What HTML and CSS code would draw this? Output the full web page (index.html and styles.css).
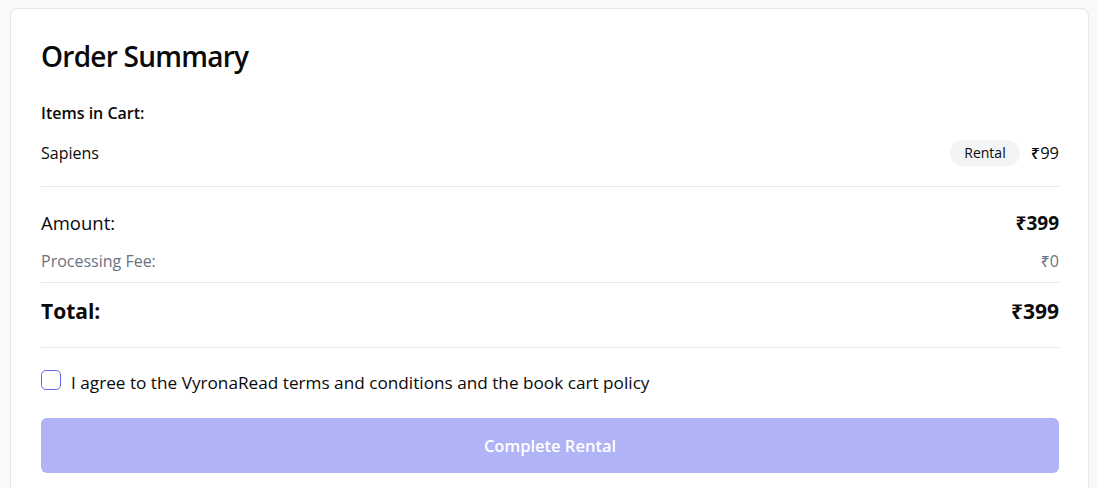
FILE: index.html
```html
<!DOCTYPE html>
<html>
<head>
<meta charset="utf-8">
<link rel="stylesheet" href="styles.css">
</head>
<body>
<div class="card">
  <h2 class="title">Order Summary</h2>
  <div class="items-label">Items in Cart:</div>
  <div class="item-row">
    <span class="item-name">Sapiens</span>
    <div class="item-right">
      <span class="badge">Rental</span>
      <span class="item-price">₹99</span>
    </div>
  </div>
  <div class="summary">
    <div class="row amount"><span>Amount:</span><span class="strong">₹399</span></div>
    <div class="row fee"><span>Processing Fee:</span><span>₹0</span></div>
    <div class="row total"><span>Total:</span><span>₹399</span></div>
  </div>
  <label class="agree">
    <span class="box"></span>
    <span class="agree-text">I agree to the VyronaRead terms and conditions and the book cart policy</span>
  </label>
  <button class="submit">Complete Rental</button>
</div>
</body>
</html>
```
FILE: styles.css
```css
* { box-sizing: border-box; }
html, body { height: 100%; }
body {
  margin: 0;
  padding: 8px 8px 0 10px;
  background: #f8f9fa;
  font-family: "Open Sans", "Noto Sans", sans-serif;
  color: #0a0a0a;
  overflow: hidden;
}
.card {
  background: #fff;
  border: 1px solid #e5e7eb;
  border-radius: 8px;
  padding: 28px 29px 40px 30px;
  min-height: 520px;
}
.title {
  margin: 0;
  font-size: 28px;
  font-weight: 600;
  line-height: 38px;
  letter-spacing: -0.75px;
}
.items-label {
  margin-top: 26px;
  font-size: 16px;
  font-weight: 600;
  line-height: 24px;
}
.item-row {
  display: flex;
  justify-content: space-between;
  align-items: center;
  margin-top: 15px;
  padding-bottom: 20px;
  border-bottom: 1px solid #e5e7eb;
  font-size: 16px;
  line-height: 26px;
}
.item-right { display: flex; align-items: center; gap: 11px; }
.badge {
  background: #f3f4f6;
  border-radius: 13px;
  padding: 0 14px;
  font-size: 14px;
  font-weight: 500;
  line-height: 26px;
}
.item-price { font-weight: 500; font-size: 16.5px; }
.summary { padding-top: 22px; }
.row {
  display: flex;
  justify-content: space-between;
  align-items: center;
}
.amount { font-size: 18.5px; line-height: 28px; }
.amount .strong { font-weight: 700; font-size: 19px; }
.fee {
  margin-top: 12px;
  font-size: 16px;
  line-height: 24px;
  color: #6b7280;
  padding-bottom: 9px;
  border-bottom: 1px solid #e5e7eb;
}
.total {
  font-size: 21px;
  font-weight: 700;
  line-height: 28px;
  padding: 14px 0 22px;
  border-bottom: 1px solid #e5e7eb;
}
.agree {
  display: flex;
  align-items: center;
  gap: 10px;
  margin-top: 23px;
  font-size: 17.2px;
  font-weight: 500;
  line-height: 24px;
}
.box {
  width: 20px;
  height: 20px;
  border: 1.5px solid #6366f1;
  border-radius: 5px;
  flex: none;
  position: relative;
  top: -3px;
}
.submit {
  display: block;
  width: 100%;
  margin-top: 23px;
  height: 55px;
  border: none;
  border-radius: 6px;
  background: #b0b3f5;
  color: #fff;
  font-family: inherit;
  font-size: 16.5px;
  font-weight: 600;
}
```
